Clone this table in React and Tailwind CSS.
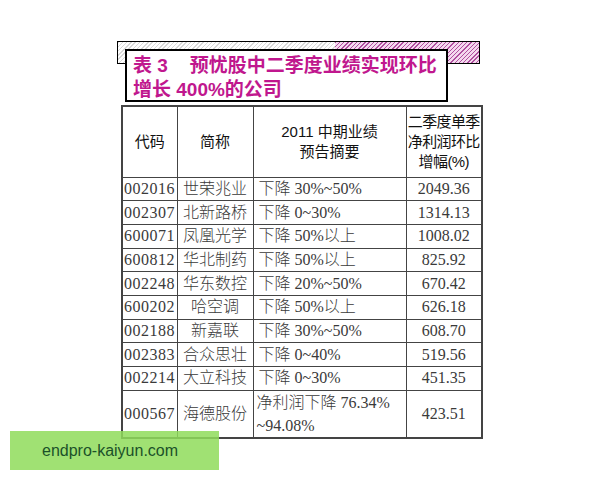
const ROWS = [
  ['002016', '世荣兆业', '下降 30%~50%', '2049.36'],
  ['002307', '北新路桥', '下降 0~30%', '1314.13'],
  ['600071', '凤凰光学', '下降 50%以上', '1008.02'],
  ['600812', '华北制药', '下降 50%以上', '825.92'],
  ['002248', '华东数控', '下降 20%~50%', '670.42'],
  ['600202', '哈空调', '下降 50%以上', '626.18'],
  ['002188', '新嘉联', '下降 30%~50%', '608.70'],
  ['002383', '合众思壮', '下降 0~40%', '519.56'],
  ['002214', '大立科技', '下降 0~30%', '451.35'],
];

const sans = "font-['Liberation_Sans','Noto_Sans_CJK_SC',sans-serif]";
const serif = "font-['Liberation_Serif','Noto_Sans_CJK_SC',serif]";

export default function App() {
  return (
    <div className="relative w-[600px] h-[480px] bg-white overflow-hidden">
      {/* title block */}
      <div className="relative ml-[117px] pt-[41px] w-[363px] h-[105px]">
        <div className="h-[23px] border-[1.5px] border-black bg-[repeating-linear-gradient(135deg,#d8d8d8_0px,#d8d8d8_1px,#ffffff_1px,#ffffff_3px)]">
          <div className="ml-auto w-[40%] h-full bg-[repeating-linear-gradient(135deg,#b04fa0_0px,#b04fa0_1px,#f4d8ee_1px,#f4d8ee_3px)]" />
        </div>
        <div className={`absolute left-[8px] top-[49px] w-[323px] h-[53px] border-2 border-black bg-white pl-[6px] pt-[3px] ${sans} font-bold text-[19px] leading-[24px] text-[#c0178e]`}>
          <div>表 3<span className="inline-block w-[22px]" />预忧股中二季度业绩实现环比</div>
          <div>增长 400%的公司</div>
        </div>
      </div>

      {/* table */}
      <table className="ml-[121px] w-[360px] table-fixed border-collapse border-2 border-[#444]">
        <colgroup>
          <col className="w-[55px]" />
          <col className="w-[76px]" />
          <col className="w-[153px]" />
          <col className="w-[76px]" />
        </colgroup>
        <thead>
          <tr className={`h-[71px] ${sans} text-[15px] leading-[20px] text-[#111]`}>
            <th className="border border-[#444] font-normal">代码</th>
            <th className="border border-[#444] font-normal">简称</th>
            <th className="border border-[#444] font-normal">
              <div>2011 中期业绩</div>
              <div>预告摘要</div>
            </th>
            <th className="border border-[#444] font-normal tracking-[-0.6px]">
              <div>二季度单季</div>
              <div>净利润环比</div>
              <div>增幅(%)</div>
            </th>
          </tr>
        </thead>
        <tbody className={`${serif} font-light text-[16px] text-[#3a3a3a]`}>
          {ROWS.map(r => (
            <tr key={r[0]} className="h-[23.7px]">
              <td className="border border-[#444] pl-[1px] leading-none tracking-[0.5px]">{r[0]}</td>
              <td className="border border-[#444] text-center leading-none">{r[1]}</td>
              <td className="border border-[#444] pl-[5px] leading-none">{r[2]}</td>
              <td className="border border-[#444] text-center leading-none">{r[3]}</td>
            </tr>
          ))}
          <tr className="h-[48px]">
            <td className="border border-[#444] pl-[1px] tracking-[0.5px]">000567</td>
            <td className="border border-[#444] text-center">海德股份</td>
            <td className="border border-[#444] pl-[3px] leading-[23px]">
              <div>净利润下降 76.34%</div>
              <div>~94.08%</div>
            </td>
            <td className="border border-[#444] text-center">423.51</td>
          </tr>
        </tbody>
      </table>

      {/* watermark banner */}
      <div className={`absolute left-[10px] top-[431px] w-[209px] h-[39px] bg-[#8fdc5a]/85 flex items-center pl-[32px] ${sans} text-[16px] text-[#1b5129]`}>
        endpro-kaiyun.com
      </div>
    </div>
  );
}
